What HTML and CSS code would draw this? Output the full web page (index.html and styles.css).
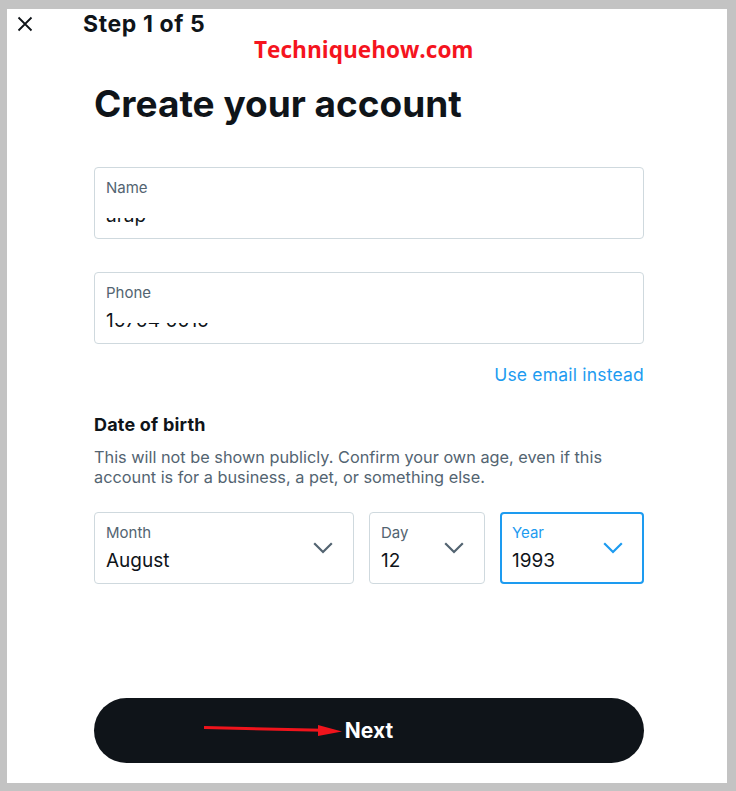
FILE: index.html
```html
<!DOCTYPE html>
<html lang="en">
<head>
    <meta charset="UTF-8">
    <meta name="viewport" content="width=device-width, initial-scale=1.0">
    <title>Create your account</title>
    <link rel="stylesheet" href="styles.css">
</head>
<body>
    <div class="frame">
        <div class="header">
            <button class="close" aria-label="Close">
                <svg viewBox="0 0 16 16" width="16" height="16">
                    <path d="M1.5 1.5 L14.5 14.5 M14.5 1.5 L1.5 14.5" stroke="#0f1419" stroke-width="1.8" fill="none"/>
                </svg>
            </button>
            <span class="step">Step 1 of 5</span>
        </div>

        <div class="watermark">Techniquehow.com</div>

        <div class="content">
            <h1 class="title">Create your account</h1>

            <div class="field">
                <span class="label">Name</span>
                <span class="value"><span class="cut">arap</span></span>
            </div>

            <div class="field field-gap">
                <span class="label">Phone</span>
                <span class="value">1<span class="cut">0704 0010</span></span>
            </div>

            <div class="switch-row">
                <a class="link" href="#">Use email instead</a>
            </div>

            <h2 class="dob-title">Date of birth</h2>
            <p class="dob-text">This will not be shown publicly. Confirm your own age, even if this account is for a business, a pet, or something else.</p>

            <div class="dob-row">
                <div class="select">
                    <div>
                        <span class="label">Month</span>
                        <span class="value">August</span>
                    </div>
                    <svg class="chevron" viewBox="0 0 20 12" width="20" height="12">
                        <path d="M1.2 1.2 L10 10 L18.8 1.2" stroke="#536471" stroke-width="2.2" fill="none"/>
                    </svg>
                </div>
                <div class="select">
                    <div>
                        <span class="label">Day</span>
                        <span class="value">12</span>
                    </div>
                    <svg class="chevron" viewBox="0 0 20 12" width="20" height="12">
                        <path d="M1.2 1.2 L10 10 L18.8 1.2" stroke="#536471" stroke-width="2.2" fill="none"/>
                    </svg>
                </div>
                <div class="select focused">
                    <div>
                        <span class="label">Year</span>
                        <span class="value">1993</span>
                    </div>
                    <svg class="chevron" viewBox="0 0 20 12" width="20" height="12">
                        <path d="M1.2 1.2 L10 10 L18.8 1.2" stroke="#1d9bf0" stroke-width="2.2" fill="none"/>
                    </svg>
                </div>
            </div>

            <button class="next">
                Next
                <svg class="arrow" viewBox="0 0 140 14" width="140" height="14">
                    <path d="M0 3.5 L118 6.2" stroke="#f0141c" stroke-width="3" fill="none"/>
                    <path d="M114 1 L138 7.5 L114 12 Z" fill="#f0141c"/>
                </svg>
            </button>
        </div>
    </div>
</body>
</html>
```

FILE: styles.css
```css
body {
    margin: 0;
    padding: 9px 9px 8px 7px;
    background-color: #c3c3c3;
    font-family: 'Inter', 'Liberation Sans', sans-serif;
    color: #0f1419;
}
.frame {
    position: relative;
    background-color: white;
    height: 774px;
}
.header {
    display: flex;
    align-items: center;
    height: 30px;
    padding-left: 10px;
}
.close {
    display: flex;
    padding: 0;
    border: none;
    background: none;
    margin-right: 50px;
}
.step {
    font-size: 23px;
    font-weight: 700;
    letter-spacing: 0.6px;
}
.watermark {
    position: absolute;
    top: 25px;
    left: 247px;
    font-family: 'Open Sans', sans-serif;
    font-size: 22.6px;
    font-weight: 700;
    color: #f5141e;
}
.content {
    padding: 0 83px 0 87px;
}
.title {
    margin: 43px 0 41px;
    font-size: 37px;
    line-height: 44px;
    font-weight: 700;
}
.field {
    display: flex;
    flex-direction: column;
    height: 72px;
    box-sizing: border-box;
    padding: 10px 11px 0;
    border: 1px solid #cfd9de;
    border-radius: 4px;
}
.field-gap {
    margin-top: 33px;
}
.label {
    display: block;
    font-size: 15px;
    line-height: 20px;
    color: #536471;
}
.value {
    display: block;
    margin-top: 6px;
    font-size: 19px;
    line-height: 24px;
    color: #0f1419;
}
.cut {
    display: inline-block;
    clip-path: inset(58% 0 0 0);
}
.switch-row {
    display: flex;
    justify-content: flex-end;
    margin-top: 19px;
}
.link {
    font-size: 17.5px;
    line-height: 24px;
    letter-spacing: 0.2px;
    color: #1d9bf0;
    text-decoration: none;
}
.dob-title {
    margin: 26px 0 0;
    font-size: 18px;
    line-height: 24px;
    font-weight: 700;
    letter-spacing: 0.2px;
}
.dob-text {
    margin: 10px 0 0;
    font-size: 16.3px;
    line-height: 20px;
    color: #536471;
}
.dob-row {
    display: grid;
    grid-template-columns: 260px 116px 1fr;
    gap: 15px;
    margin-top: 25px;
}
.select {
    display: flex;
    justify-content: space-between;
    align-items: center;
    height: 72px;
    box-sizing: border-box;
    padding: 0 20px 0 11px;
    border: 1px solid #cfd9de;
    border-radius: 4px;
}
.select > div {
    align-self: flex-start;
    padding-top: 10px;
}
.select.focused {
    border: 2px solid #1d9bf0;
    padding: 0 19px 0 10px;
}
.select.focused > div {
    padding-top: 9px;
}
.focused .label {
    color: #1d9bf0;
}
.next {
    position: relative;
    display: block;
    width: 100%;
    height: 65px;
    margin-top: 114px;
    border: none;
    border-radius: 33px;
    background-color: #0f1419;
    color: white;
    font-family: 'Inter', sans-serif;
    font-size: 21px;
    font-weight: 700;
    cursor: pointer;
}
.arrow {
    position: absolute;
    left: 110px;
    top: 26px;
}
```
